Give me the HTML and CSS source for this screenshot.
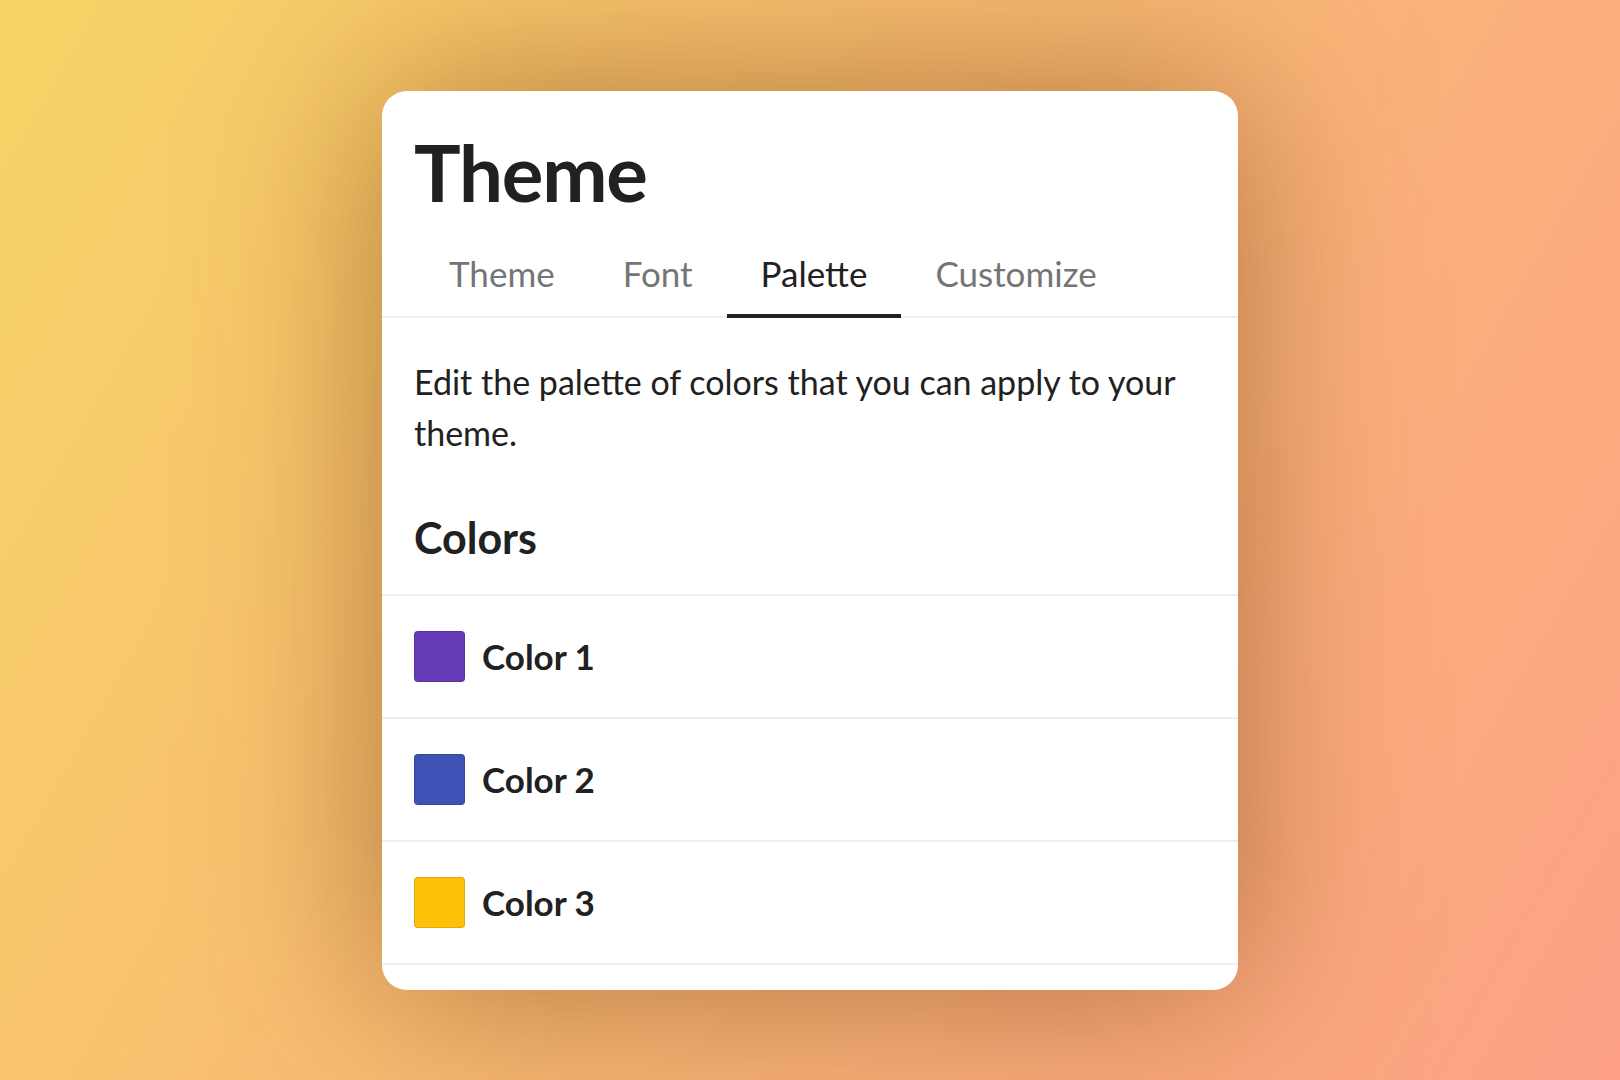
FILE: index.html
```html
<!DOCTYPE html>
<html lang="en">
<head>
<meta charset="utf-8">
<title>Theme</title>
<link rel="stylesheet" href="styles.css">
</head>
<body>
<div class="stage">
  <div class="card">
    <h1 class="title">Theme</h1>
    <nav class="tabs">
      <div class="tab">Theme</div>
      <div class="tab">Font</div>
      <div class="tab active">Palette</div>
      <div class="tab">Customize</div>
    </nav>
    <p class="desc">Edit the palette of colors that you can apply to your theme.</p>
    <h2 class="section">Colors</h2>
    <ul class="list">
      <li class="row"><span class="swatch purple"></span><span class="label">Color 1</span></li>
      <li class="row"><span class="swatch indigo"></span><span class="label">Color 2</span></li>
      <li class="row"><span class="swatch amber"></span><span class="label">Color 3</span></li>
    </ul>
  </div>
</div>
</body>
</html>
```

FILE: styles.css
```css
html, body {
  margin: 0;
  padding: 0;
  height: 100%;
}
body {
  font-family: Lato, "Open Sans", sans-serif;
  background: linear-gradient(120deg, #f6d365 0%, #fda085 100%);
  color: #212121;
}
.stage {
  height: 100%;
  display: flex;
  align-items: center;
  justify-content: center;
}
.card {
  width: 856px;
  height: 899px;
  box-sizing: border-box;
  background: #fff;
  border-radius: 25px;
  box-shadow: 0 0 180px rgba(110, 55, 10, 0.52);
  overflow: hidden;
  display: flex;
  flex-direction: column;
}
.title {
  margin: 0;
  padding: 31px 32px 0;
  font-size: 78px;
  font-weight: 700;
  line-height: 100px;
  letter-spacing: -1.2px;
  color: #212121;
}
.tabs {
  display: flex;
  padding: 0 33px;
  margin-top: 11px;
  border-bottom: 2px solid #eeeeee;
}
.tab {
  padding: 0 34px;
  height: 85px;
  display: flex;
  align-items: center;
  font-size: 35px;
  color: #757575;
  box-sizing: border-box;
  border-bottom: 4px solid transparent;
  margin-bottom: -2px;
}
.tab.active {
  color: #212121;
  border-bottom-color: #212121;
}
.desc {
  margin: 38px 32px 0;
  font-size: 34px;
  line-height: 51px;
  color: #212121;
}
.section {
  margin: 52px 32px 0;
  font-size: 43px;
  font-weight: 700;
  line-height: 56px;
  height: 56px;
}
.list {
  list-style: none;
  margin: 28px 0 0;
  padding: 0;
  border-top: 2px solid #eeeeee;
}
.row {
  display: flex;
  align-items: center;
  gap: 17px;
  height: 121px;
  padding: 0 32px;
  border-bottom: 2px solid #eeeeee;
}
.swatch {
  width: 51px;
  height: 51px;
  box-sizing: border-box;
  border-radius: 4px;
  border: 1px solid rgba(0, 0, 0, 0.12);
}
.purple { background: #673ab7; }
.indigo { background: #3f51b5; }
.amber { background: #ffc107; }
.label {
  font-size: 35px;
  font-weight: 700;
  color: #212121;
}
```
